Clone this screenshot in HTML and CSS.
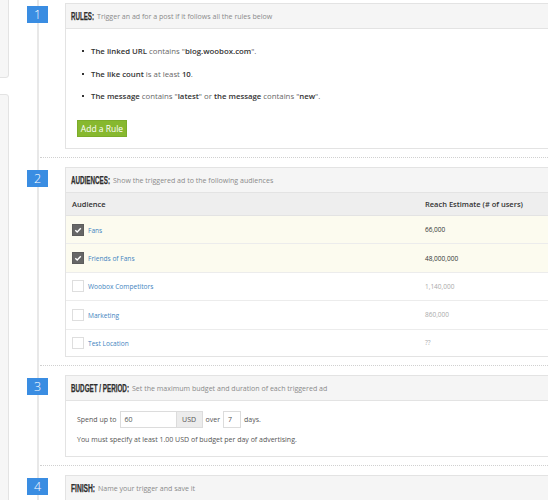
FILE: index.html
```html
<!DOCTYPE html>
<html>
<head>
<meta charset="utf-8">
<link rel="stylesheet" href="styles.css">
</head>
<body>
<div class="page">
  <div class="sidebar">
    <div class="side-box side-top"></div>
    <div class="side-box side-bottom"></div>
  </div>
  <div class="timeline">
    <div class="step">
      <div class="badge">1</div>
      <div class="panel">
        <div class="panel-head"><span class="title t-rules"><span class="title-in">RULES:</span></span><span class="desc">Trigger an ad for a post if it follows all the rules below</span></div>
        <div class="panel-body rules-body">
          <ul class="rules">
            <li><b>The linked URL</b> contains "<b>blog.woobox.com</b>".</li>
            <li><b>The like count</b> is at least <b>10</b>.</li>
            <li><b>The message</b> contains "<b>latest</b>" or <b>the message</b> contains "<b>new</b>".</li>
          </ul>
          <button class="btn">Add a Rule</button>
        </div>
      </div>
    </div>
    <div class="sep"></div>
    <div class="step">
      <div class="badge">2</div>
      <div class="panel">
        <div class="panel-head"><span class="title t-aud"><span class="title-in">AUDIENCES:</span></span><span class="desc">Show the triggered ad to the following audiences</span></div>
        <table class="aud">
          <thead>
            <tr><th class="c1">Audience</th><th class="c2">Reach Estimate (# of users)</th></tr>
          </thead>
          <tbody>
            <tr class="on"><td class="c1"><span class="cb checked"><svg viewBox="0 0 12 12" width="12" height="12"><path d="M3.3 6.2 L5.2 8 L8.8 4.3" fill="none" stroke="#fff" stroke-width="1.4"/></svg></span><a class="lnk">Fans</a></td><td class="c2">66,000</td></tr>
            <tr class="on"><td class="c1"><span class="cb checked"><svg viewBox="0 0 12 12" width="12" height="12"><path d="M3.3 6.2 L5.2 8 L8.8 4.3" fill="none" stroke="#fff" stroke-width="1.4"/></svg></span><a class="lnk">Friends of Fans</a></td><td class="c2">48,000,000</td></tr>
            <tr><td class="c1"><span class="cb"></span><a class="lnk">Woobox Competitors</a></td><td class="c2">1,140,000</td></tr>
            <tr><td class="c1"><span class="cb"></span><a class="lnk">Marketing</a></td><td class="c2">860,000</td></tr>
            <tr class="last"><td class="c1"><span class="cb"></span><a class="lnk">Test Location</a></td><td class="c2">??</td></tr>
          </tbody>
        </table>
      </div>
    </div>
    <div class="sep"></div>
    <div class="step">
      <div class="badge">3</div>
      <div class="panel">
        <div class="panel-head"><span class="title t-budget"><span class="title-in">BUDGET / PERIOD:</span></span><span class="desc">Set the maximum budget and duration of each triggered ad</span></div>
        <div class="panel-body budget-body">
          <div class="budget-row">
            <span>Spend up to</span>
            <span class="inp amount">60</span><span class="addon">USD</span>
            <span>over</span>
            <span class="inp days">7</span>
            <span>days.</span>
          </div>
          <div class="note">You must specify at least 1.00 USD of budget per day of advertising.</div>
        </div>
      </div>
    </div>
    <div class="sep"></div>
    <div class="step">
      <div class="badge">4</div>
      <div class="panel">
        <div class="panel-head"><span class="title t-finish"><span class="title-in">FINISH:</span></span><span class="desc">Name your trigger and save it</span></div>
        <div class="panel-body finish-body"></div>
      </div>
    </div>
  </div>
</div>
</body>
</html>
```
FILE: styles.css
```css
html, body {
  margin: 0;
  padding: 0;
  overflow: hidden;
  background: #fff;
  width: 548px;
  height: 500px;
}
body {
  font-family: "Open Sans", "DejaVu Sans", sans-serif;
  font-size: 7px;
  color: #555;
}
.page {
  display: flex;
  height: 500px;
  overflow: hidden;
}
.sidebar {
  width: 10px;
  flex: none;
  display: flex;
  flex-direction: column;
}
.side-box {
  width: 14px;
  margin-left: -5px;
  background: #f6f6f6;
  border: 1px solid #e3e3e3;
  border-radius: 3px;
  box-sizing: border-box;
}
.side-top {
  height: 82px;
  margin-top: -4px;
}
.side-bottom {
  margin-top: 16px;
  flex: 1;
  margin-bottom: -10px;
}
.timeline {
  flex: 1;
  min-width: 0;
  overflow: hidden;
  padding-top: 3px;
  background: linear-gradient(to right, transparent 27px, #e8e8e8 27px, #e8e8e8 29px, transparent 29px);
}
.step {
  display: flex;
  align-items: flex-start;
}
.badge {
  flex: none;
  width: 21px;
  height: 17px;
  margin-left: 17px;
  margin-top: 3px;
  background: #3a8de2;
  color: #fff;
  font-family: "Open Sans", sans-serif;
  font-weight: 300;
  font-size: 12.5px;
  line-height: 17px;
  text-align: center;
}
.panel {
  flex: none;
  width: 600px;
  margin-left: 17px;
  border: 1px solid #e3e3e3;
  background: #fff;
}
.panel-head {
  height: 24px;
  border-bottom: 1px solid #e3e3e3;
  background: #f5f5f5;
  display: flex;
  align-items: center;
  padding-left: 5px;
}
.title {
  flex: none;
  display: block;
  margin-right: 3px;
  height: 12px;
  overflow: visible;
}
.title-in {
  display: block;
  white-space: nowrap;
  font-family: "Liberation Sans", "DejaVu Sans", sans-serif;
  font-weight: bold;
  font-size: 10.5px;
  line-height: 12px;
  color: #2e2e2e;
  transform-origin: 0 50%;
  -webkit-text-stroke: 0.25px #2e2e2e;
}
.t-rules { width: 23px; }
.t-rules .title-in { transform: scaleX(0.588); }
.t-aud { width: 39px; }
.t-aud .title-in { transform: scaleX(0.597); }
.t-budget { width: 58px; }
.t-budget .title-in { transform: scaleX(0.599); }
.t-finish { width: 24px; }
.t-finish .title-in { transform: scaleX(0.633); }
.desc {
  color: #8a8a8a;
  font-size: 7.05px;
  white-space: nowrap;
}
.panel-body {
  padding: 11px 11px 11px 11px;
}
.rules {
  list-style: none;
  margin: 0;
  padding: 0;
}
.rules li {
  line-height: 22.5px;
  padding-left: 14px;
  position: relative;
  color: #666;
  font-size: 7.8px;
}
.rules li::before {
  content: "";
  position: absolute;
  left: 5px;
  top: 10px;
  width: 2px;
  height: 2px;
  background: #333;
}
.rules b {
  color: #333;
  font-weight: 600;
}
.btn {
  display: block;
  margin-top: 12.5px;
  width: 50px;
  height: 17px;
  padding: 0;
  border: 1px solid #7cac2a;
  background: #87b82f;
  color: #fff;
  font-family: "Open Sans", sans-serif;
  font-size: 8.5px;
}
.aud {
  border-collapse: collapse;
  width: 100%;
}
.aud th {
  background: #eeeeee;
  height: 22px;
  padding: 0;
  text-align: left;
  font-weight: 600;
  color: #333;
  font-size: 7.5px;
  border-bottom: 1px solid #e3e3e3;
}
.aud td {
  height: 27.4px;
  padding: 0;
  border-bottom: 1px solid #ececec;
  font-size: 6.5px;
}
.aud tr.last td {
  border-bottom: none;
  height: 26px;
}
.aud .c1 {
  width: 353px;
  padding-left: 6px;
}
.aud .c2 {
  color: #aaa;
}
.aud th.c2 {
  color: #333;
}
.aud tr.on td {
  background: #fcfbef;
}
.aud tr.on .c2 {
  color: #333;
}
.cb {
  display: inline-block;
  vertical-align: middle;
  width: 12px;
  height: 12px;
  box-sizing: border-box;
  border: 1px solid #dedede;
  background: #fff;
  margin-right: 4px;
}
.cb.checked {
  background: #666;
  border-color: #5c5c5c;
}
.cb svg {
  display: block;
  margin: -1px;
}
.lnk {
  color: #4384c0;
  vertical-align: middle;
  font-size: 6.6px;
}
.budget-body {
  padding: 10px 11px 10px 11px;
}
.budget-row {
  display: flex;
  align-items: center;
  height: 17px;
  color: #555;
}
.inp {
  box-sizing: border-box;
  height: 17px;
  border: 1px solid #dcdcdc;
  line-height: 15px;
  padding-left: 4px;
  color: #555;
}
.amount {
  width: 57px;
  margin-left: 3px;
}
.addon {
  box-sizing: border-box;
  width: 26px;
  height: 17px;
  line-height: 15px;
  background: #ececec;
  border: 1px solid #dcdcdc;
  border-left: none;
  text-align: center;
  margin-right: 3px;
}
.days {
  width: 18px;
  margin-left: 3px;
  margin-right: 3px;
}
.note {
  margin-top: 6px;
  line-height: 12px;
  color: #555;
}
.finish-body {
  height: 40px;
}
.sep {
  margin: 8px 0 9px 30px;
  border-top: 1px dotted #d0d0d0;
}
```
